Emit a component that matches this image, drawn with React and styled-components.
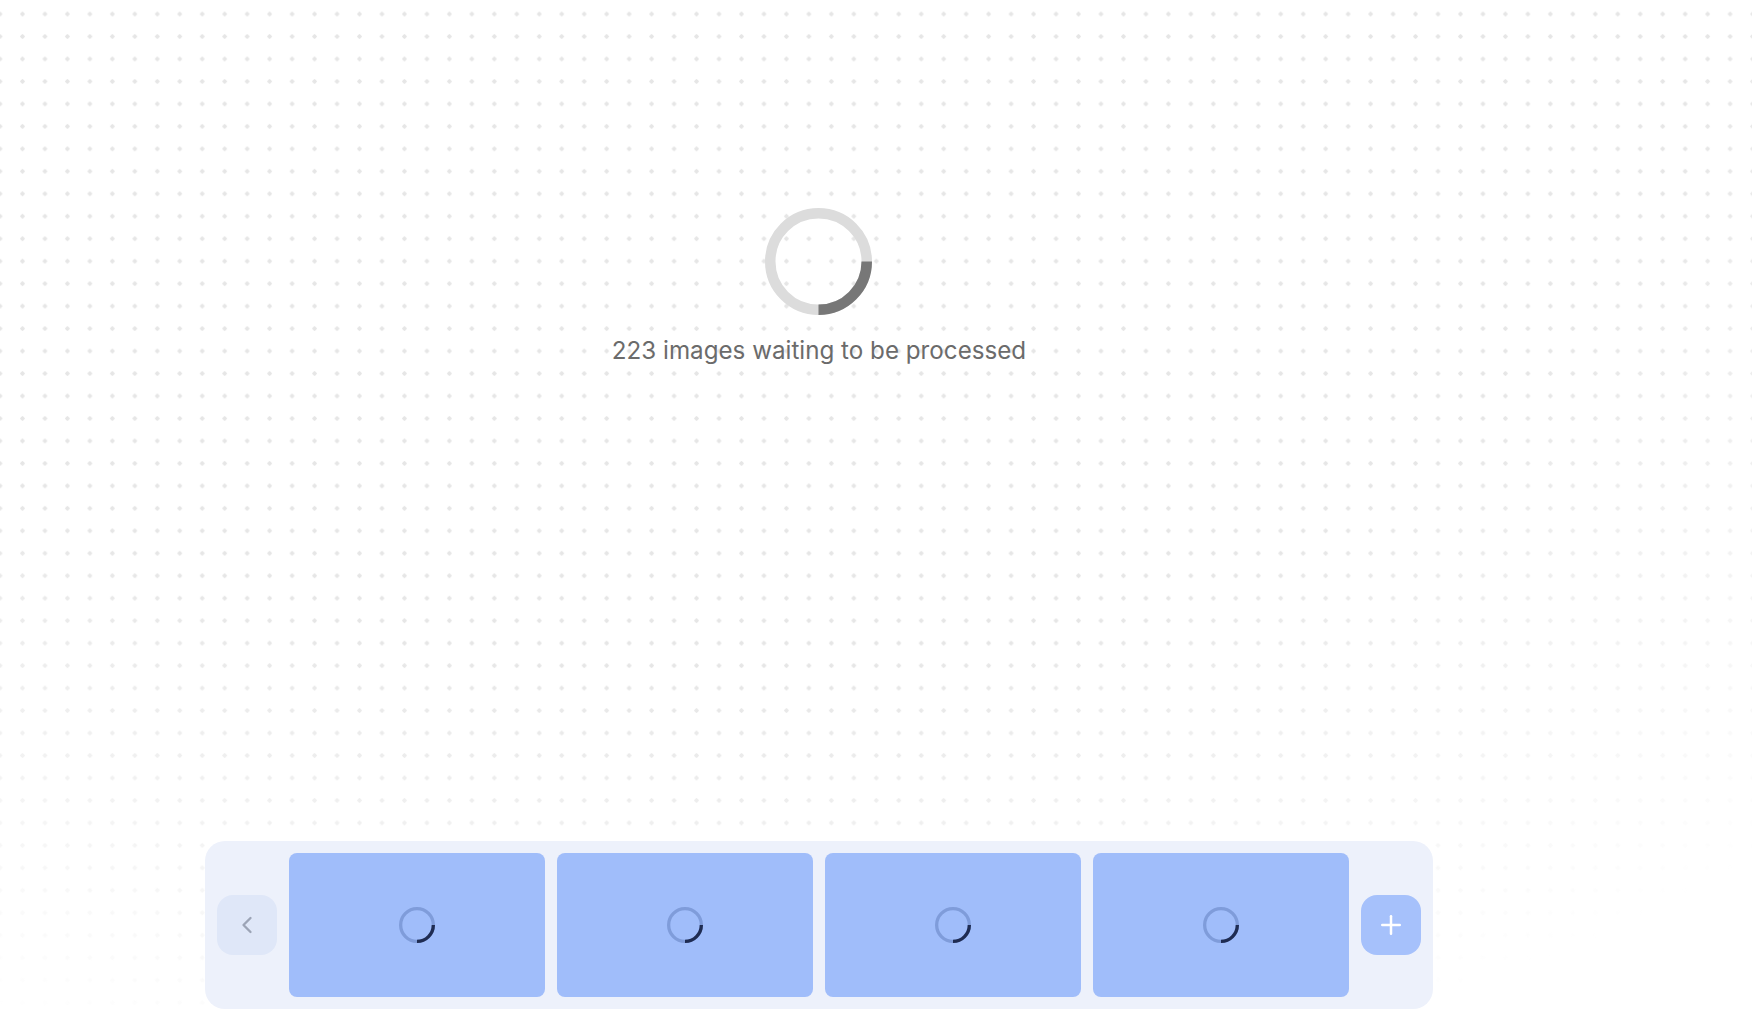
import styled, { createGlobalStyle } from 'styled-components';
import { ChevronLeft, Plus } from 'lucide-react';

const GlobalStyle = createGlobalStyle`
  html, body {
    margin: 0;
    padding: 0;
    background: #ffffff;
    font-family: Inter, "Noto Sans", "Liberation Sans", sans-serif;
  }
  * { box-sizing: border-box; }
`;

const Page = styled.div`
  position: relative;
  height: 100vh;
  overflow: hidden;
  display: flex;
  flex-direction: column;
  align-items: center;
  padding-right: 114px;
`;

const DotGrid = styled.div`
  position: absolute;
  inset: 0;
  z-index: 0;
  background-image: radial-gradient(circle, #e6e6e6 1.9px, transparent 2.3px);
  background-size: 22.48px 22.48px;
  background-position: -11.24px 2.8px;
  -webkit-mask-image: radial-gradient(ellipse 95% 110% at 40% 0%, #000 60%, transparent 100%);
  mask-image: radial-gradient(ellipse 95% 110% at 40% 0%, #000 60%, transparent 100%);
`;

const Status = styled.div`
  position: relative;
  z-index: 1;
  margin-top: 208px;
  display: flex;
  flex-direction: column;
  align-items: center;
  gap: 21px;
`;

const Message = styled.p`
  margin: 0;
  font-size: 24.2px;
  line-height: 29px;
  color: #6b6b6b;
`;

const Spacer = styled.div`
  flex: 1;
`;

const Tray = styled.div`
  position: relative;
  z-index: 1;
  margin-bottom: 4px;
  width: 1228px;
  padding: 12px;
  display: flex;
  align-items: center;
  gap: 12px;
  background: #edf1fb;
  border-radius: 20px;
`;

const NavButton = styled.button`
  width: 60px;
  height: 60px;
  flex: none;
  border: none;
  border-radius: 16px;
  display: flex;
  align-items: center;
  justify-content: center;
  padding: 0;
  cursor: pointer;
  background: ${(p) => (p.$primary ? '#a6c1fb' : '#dfe7f8')};
  color: ${(p) => (p.$primary ? '#ffffff' : '#9ca4b6')};
`;

const Thumb = styled.div`
  width: 256px;
  height: 144px;
  flex: none;
  border-radius: 8px;
  background: #a0bdfa;
  display: flex;
  align-items: center;
  justify-content: center;
`;

const Ring = ({ size, stroke, track, arc }) => {
  const r = (size - stroke) / 2;
  const c = size / 2;
  return (
    <svg width={size} height={size} viewBox={`0 0 ${size} ${size}`}>
      <circle cx={c} cy={c} r={r} fill="none" stroke={track} strokeWidth={stroke} />
      <path
        d={`M ${c + r} ${c} A ${r} ${r} 0 0 1 ${c} ${c + r}`}
        fill="none"
        stroke={arc}
        strokeWidth={stroke}
      />
    </svg>
  );
};

const App = () => {
  const thumbs = [1, 2, 3, 4];
  return (
    <>
      <GlobalStyle />
      <Page>
        <DotGrid />
        <Status>
          <Ring size={107} stroke={10.5} track="#dcdcdc" arc="#777777" />
          <Message>223 images waiting to be processed</Message>
        </Status>
        <Spacer />
        <Tray>
          <NavButton aria-label="previous">
            <ChevronLeft size={28} strokeWidth={2} />
          </NavButton>
          {thumbs.map((t) => (
            <Thumb key={t}>
              <Ring size={36} stroke={3.3} track="#7f9cda" arc="#1f2c52" />
            </Thumb>
          ))}
          <NavButton $primary aria-label="add">
            <Plus size={30} strokeWidth={2} />
          </NavButton>
        </Tray>
      </Page>
    </>
  );
};

export default App;
